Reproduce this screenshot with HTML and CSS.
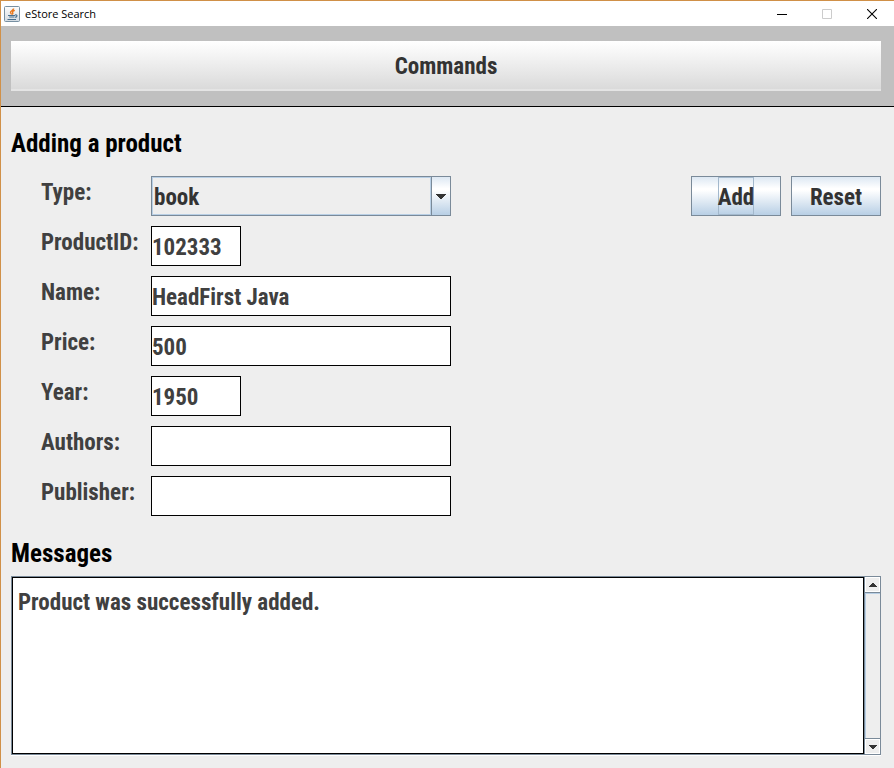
FILE: index.html
```html
<!DOCTYPE html>
<html lang="en">
<head>
<meta charset="utf-8">
<title>eStore Search</title>
<link rel="stylesheet" href="styles.css">
</head>
<body>
<div class="window">
  <header class="titlebar">
    <svg class="app-icon" viewBox="0 0 16 16" aria-hidden="true">
      <defs>
        <linearGradient id="tile" x1="0" y1="0" x2="0" y2="1">
          <stop offset="0" stop-color="#fdfdfd"/><stop offset="1" stop-color="#d3dbe2"/>
        </linearGradient>
      </defs>
      <rect x=".5" y=".5" width="15" height="15" rx="1" fill="url(#tile)" stroke="#7890a2"/>
      <path d="M9.600 2.500C9.800 4.200 6.300 4.800 6.500 6.500c.1.900.8 1.300 1.200 2M10.800 4.400C8.700 5 8 5.800 8.700 6.700c.5.700.1 1.200-.4 1.700" fill="none" stroke="#e8781e" stroke-width="1.400"/>
      <path d="M4 9.500h7M5.200 11h5.300M11 9c2.600-.6 2.600 1.900.2 2.300M3.500 13.500h8.500" fill="none" stroke="#48708f" stroke-width="1.200"/>
    </svg>
    <span class="title">eStore Search</span>
    <div class="window-controls">
      <button type="button" aria-label="Minimize"><svg viewBox="0 0 10 10"><path d="M0 5.500h10" stroke="#000"/></svg></button>
      <button type="button" aria-label="Maximize" disabled><svg viewBox="0 0 10 10"><path d="M.5.500h9v9h-9z" fill="none" stroke="#ccc"/></svg></button>
      <button type="button" aria-label="Close"><svg viewBox="0 0 10 10"><path d="M0 0l10 10M10 0L0 10" stroke="#000" stroke-width="1.100"/></svg></button>
    </div>
  </header>

  <nav class="toolbar">
    <button type="button" class="commands">Commands</button>
  </nav>

  <main class="content">
    <h1 class="heading">Adding a product</h1>
    <form class="product">
      <div class="fields">
        <label for="type">Type:</label>
        <div class="combo">
          <select id="type"><option>book</option><option>electronics</option></select>
          <svg class="combo-arrow" viewBox="0 0 18 38" aria-hidden="true"><path d="M4 17h10v1h-1v1h-1v1h-1v1h-1v1H8v-1H7v-1H6v-1H5v-1H4z" fill="#333"/></svg>
        </div>
        <label for="id">ProductID:</label>
        <input id="id" class="short" type="text" value="102333">
        <label for="name">Name:</label>
        <input id="name" type="text" value="HeadFirst Java">
        <label for="price">Price:</label>
        <input id="price" type="text" value="500">
        <label for="year">Year:</label>
        <input id="year" class="short" type="text" value="1950">
        <label for="authors">Authors:</label>
        <input id="authors" type="text">
        <label for="publisher">Publisher:</label>
        <input id="publisher" type="text">
      </div>
      <div class="actions">
        <button type="button" class="metal"><span class="focused">Add</span></button>
        <button type="reset" class="metal"><span>Reset</span></button>
      </div>
    </form>

    <h2 class="heading"><label for="messages">Messages</label></h2>
    <div class="messages">
      <textarea id="messages" readonly>Product was successfully added.</textarea>
      <div class="scrollbar">
        <button type="button" aria-label="Scroll up"><svg viewBox="0 0 8 4"><path d="M3 0h2v1h1v1h1v1h1v1H0V3h1V2h1V1h1z" fill="#333"/></svg></button>
        <div class="track"></div>
        <button type="button" aria-label="Scroll down"><svg viewBox="0 0 8 4"><path d="M0 0h8v1H7v1H6v1H5v1H3V3H2V2H1V1H0z" fill="#333"/></svg></button>
      </div>
    </div>
  </main>
</div>
</body>
</html>
```
FILE: styles.css
```css
* {
  box-sizing: border-box;
}

body {
  margin: 0;
  background: #eee;
  color: #404040;
  font: bold 23px/40px "Agency FB", "Roboto Condensed", "Liberation Sans Narrow", "Liberation Sans", sans-serif;
}

button,
input,
select,
textarea {
  margin: 0;
  padding: 0;
  border: 0;
  border-radius: 0;
  outline: 0;
  font: inherit;
  color: inherit;
}

svg {
  display: block;
}

.window {
  display: flex;
  flex-direction: column;
  min-height: 100vh;
  border: solid #d09048;
  border-width: 1px 0 0 1px;
}

.titlebar {
  display: flex;
  align-items: center;
  height: 25px;
  padding-left: 3px;
  background: #fff;
  color: #000;
  font: 11px/24px "Segoe UI", "Open Sans", "Noto Sans", sans-serif;
}

.app-icon {
  width: 16px;
  height: 16px;
}

.title {
  margin-left: 5px;
}

.window-controls {
  display: flex;
  height: 100%;
  margin-left: auto;
}

.window-controls button {
  display: flex;
  align-items: center;
  justify-content: center;
  width: 45px;
  background: none;
}

.window-controls svg {
  width: 10px;
  height: 10px;
}

.toolbar {
  padding: 15px 13px 15px 10px;
  border-bottom: 1px solid #000;
  background: #c0c0c0;
}

.commands {
  display: block;
  width: 100%;
  height: 50px;
  padding-top: 4px;
  border-bottom: 2px solid #e4e4e4;
  background: linear-gradient(#fff, #dadada);
  color: #333;
}

.content {
  display: flex;
  flex: 1;
  flex-direction: column;
  padding: 17px 13px 13px 10px;
}

.heading {
  margin: 0;
  color: #000;
  font-size: 25px;
}

.product {
  display: flex;
  justify-content: space-between;
  margin: 12px 0 18px;
}

.fields {
  display: grid;
  grid-template-columns: 100px 300px;
  grid-auto-rows: 40px;
  gap: 10px;
  padding-left: 30px;
}

.fields label {
  line-height: 34px;
  white-space: nowrap;
}

.fields input {
  width: 100%;
  padding-top: 3px;
  border: 1px solid #000;
  background: #fff;
}

.fields .short {
  width: 90px;
}

.combo {
  display: flex;
  border: 1px solid #7a8a99;
  color: #333;
}

.combo select {
  flex: 1;
  padding-left: 1px;
  border: 1px solid #b8cfe5;
  background: #eee;
  appearance: none;
}

.combo-arrow {
  width: 19px;
  height: 38px;
  border-left: 1px solid #7a8a99;
  background: linear-gradient(#dde8f3, #fff 30%, #fff 35%, #b8cfe5);
}

.actions {
  display: flex;
  gap: 10px;
}

.metal {
  display: flex;
  justify-content: center;
  width: 90px;
  height: 40px;
  border: 1px solid #7a8a99;
  background: linear-gradient(#dde8f3, #fff 30%, #fff 35%, #b8cfe5);
  color: #333;
  line-height: 42px;
}

.focused {
  height: 38px;
  box-shadow: inset 0 0 0 1px #a3b8cc;
}

.messages {
  display: flex;
  flex: 1;
  margin-top: 2px;
  border: 1px solid #7a8a99;
  box-shadow: 0 1px #fff;
}

.messages textarea {
  flex: 1;
  padding: 5px;
  border: 1px solid #000;
  background: #fff;
  resize: none;
}

.scrollbar {
  display: flex;
  flex-direction: column;
  width: 16px;
  border-left: 1px solid #7a8a99;
}

.scrollbar button {
  display: flex;
  align-items: center;
  justify-content: center;
  height: 15px;
  border: 1px solid #fff;
  background: #eee;
}

.scrollbar svg {
  width: 8px;
  height: 4px;
}

.track {
  flex: 1;
  border: solid #7a8a99;
  border-width: 1px 0;
  box-shadow: inset 1px 1px #b8cfe5;
}
```
